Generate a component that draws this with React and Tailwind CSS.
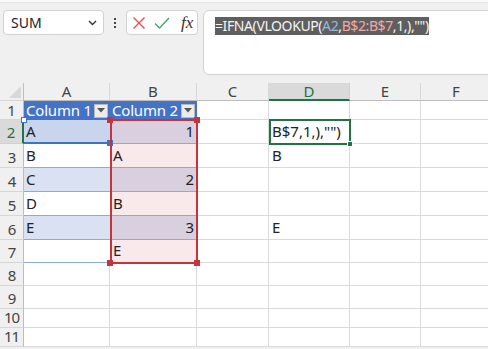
import React from 'react';

const font = { fontFamily: '"Noto Sans", "Noto Sans CJK SC", sans-serif' };

const COLS = [
  { key: 'A', w: 'w-[86px]' },
  { key: 'B', w: 'w-[87px]' },
  { key: 'C', w: 'w-[72px]' },
  { key: 'D', w: 'w-[81px]' },
  { key: 'E', w: 'w-[71px]' },
  { key: 'F', w: 'w-[71px]' },
];

// row height, cell values
const ROWS = [
  { n: 2, h: 'h-[24px]', cells: { A: 'A', B: '1', D: 'B$7,1,),"")' } },
  { n: 3, h: 'h-[24px]', cells: { A: 'B', B: 'A', D: 'B' } },
  { n: 4, h: 'h-[24px]', cells: { A: 'C', B: '2' } },
  { n: 5, h: 'h-[24px]', cells: { A: 'D', B: 'B' } },
  { n: 6, h: 'h-[24px]', cells: { A: 'E', B: '3', D: 'E' } },
  { n: 7, h: 'h-[23px]', cells: { B: 'E' } },
  { n: 8, h: 'h-[23px]', cells: {} },
  { n: 9, h: 'h-[23px]', cells: {} },
  { n: 10, h: 'h-[19px]', cells: {} },
  { n: 11, h: 'h-[19px]', cells: {} },
];

const bandA = { 2: 'bg-[#c9d5ec]', 3: 'bg-white', 4: 'bg-[#d9e1f2]', 5: 'bg-white', 6: 'bg-[#d9e1f2]', 7: 'bg-white' };
const bandB = { 2: 'bg-[#d8d0df]', 3: 'bg-[#f9e9ea]', 4: 'bg-[#d8d0df]', 5: 'bg-[#f9e9ea]', 6: 'bg-[#d8d0df]', 7: 'bg-[#f9e9ea]' };

function FilterButton() {
  return (
    <div className="w-[14px] h-[14px] shrink-0 bg-[#ececec] border border-[#b8b8b8] flex items-center justify-center">
      <svg width="8" height="5" viewBox="0 0 8 5">
        <path d="M0 0 L8 0 L4 4.5 Z" fill="#555" />
      </svg>
    </div>
  );
}

function Toolbar() {
  return (
    <div className="h-[83px] bg-[#f0f0f0]">
      <div className="h-[3px] bg-[#fafafa] border-b border-[#e3e3e3]" />
      <div className="flex items-start pt-[7px] pl-[3px]">
        <div className="w-[101px] h-[25px] shrink-0 rounded-[4px] border border-[#d2d2d2] bg-white flex items-center justify-between pl-[7px] pr-[6px]">
          <span className="text-[14px] text-[#222]">SUM</span>
          <svg width="9" height="6" viewBox="0 0 9 6">
            <path d="M1 1 L4.5 4.5 L8 1" fill="none" stroke="#333" strokeWidth="1.4" />
          </svg>
        </div>
        <div className="w-[22px] h-[25px] shrink-0 flex flex-col items-center justify-center gap-[2px]">
          <span className="w-[2px] h-[2px] bg-[#444]" />
          <span className="w-[2px] h-[2px] bg-[#444]" />
          <span className="w-[2px] h-[2px] bg-[#444]" />
        </div>
        <div className="w-[72px] h-[25px] shrink-0 rounded-[4px] border border-[#d2d2d2] bg-white flex items-center pl-[5px] gap-[8px]">
          <svg width="14" height="14" viewBox="0 0 14 14">
            <path d="M1.5 1.5 L12.5 12.5 M12.5 1.5 L1.5 12.5" stroke="#e5484d" strokeWidth="1.3" />
          </svg>
          <svg width="16" height="14" viewBox="0 0 16 14">
            <path d="M1 7.5 L5.5 12 L15 2" fill="none" stroke="#3fa65f" strokeWidth="1.3" />
          </svg>
          <span className="ml-[3px] text-[17px] italic text-[#333] leading-none" style={{ fontFamily: '"Liberation Serif", serif' }}>fx</span>
        </div>
        <div className="ml-[5px] w-[300px] h-[65px] shrink-0 rounded-[6px] border border-[#d2d2d2] bg-white pl-[11px] pt-[2px]">
          <span className="inline-block bg-[#5f5f5f] text-[14px] leading-[18px] text-[#f5f5f5] tracking-[-0.4px]">
            =IFNA(VLOOKUP(<span className="text-[#93b9e6]">A2</span>,<span className="text-[#f2a9a6]">B$2:B$7</span>,1,),"")
          </span>
        </div>
      </div>
    </div>
  );
}

function ColumnHeader() {
  return (
    <div className="flex h-[18px] bg-[#f0f0f0]">
      <div className="w-[24px] shrink-0 border-r border-[#bdbdbd] border-b border-b-[#d6d6d6] relative">
        <svg className="absolute right-[2px] bottom-[2px]" width="12" height="12" viewBox="0 0 12 12">
          <path d="M12 0 L12 12 L0 12 Z" fill="#d8d8d8" />
        </svg>
      </div>
      {COLS.map((c) =>
        c.key === 'D' ? (
          <div key={c.key} className={`${c.w} shrink-0 bg-[#dadada] border-r border-[#d0d0d0] border-b-2 border-b-[#217346] flex items-center justify-center text-[15px] text-[#217346]`}>
            {c.key}
          </div>
        ) : (
          <div key={c.key} className={`${c.w} shrink-0 border-r border-[#d8d8d8] border-b border-b-[#bdbdbd] flex items-center justify-center text-[15px] text-[#444]`}>
            {c.key}
          </div>
        )
      )}
    </div>
  );
}

function TableHeaderRow() {
  return (
    <div className="flex h-[19px]">
      <div className="w-[24px] shrink-0 bg-[#f0f0f0] border-r border-[#bdbdbd] border-b border-b-[#d6d6d6] flex items-center justify-center text-[15px] text-[#444]">1</div>
      <div className="w-[86px] shrink-0 bg-[#4472c4] flex items-center justify-between pl-[2px] pr-[2px] text-[15px] text-white tracking-[-0.2px]">
        <span>Column 1</span>
        <FilterButton />
      </div>
      <div className="w-[87px] shrink-0 bg-[#4472c4] flex items-center justify-between pl-[2px] pr-[2px] text-[15px] text-white tracking-[-0.2px]">
        <span>Column 2</span>
        <FilterButton />
      </div>
      {COLS.slice(2).map((c) => (
        <div key={c.key} className={`${c.w} shrink-0 bg-white border-r border-b border-[#dadada]`} />
      ))}
    </div>
  );
}

function DataRow({ row }) {
  const inTable = row.n <= 7;
  const active = row.n === 2;
  return (
    <div className={`flex ${row.h}`}>
      {active ? (
        <div className="w-[24px] shrink-0 bg-[#dadada] border-r-2 border-[#217346] border-b border-b-[#d0d0d0] flex items-end justify-center text-[15px] text-[#217346]">{row.n}</div>
      ) : (
        <div className="w-[24px] shrink-0 bg-[#f0f0f0] border-r border-[#bdbdbd] border-b border-b-[#d6d6d6] flex items-end justify-center text-[15px] leading-[20px] text-[#444] tracking-[-1px]">{row.n}</div>
      )}
      {COLS.map((c) => {
        const v = row.cells[c.key];
        if (inTable && c.key === 'A') {
          return (
            <div key={c.key} className={`${c.w} shrink-0 ${bandA[row.n]} border-b border-[#8ea9db] flex items-end pb-[1px] pl-[2px] text-[15px] text-[#222]`}>
              {v}
            </div>
          );
        }
        if (inTable && c.key === 'B') {
          const num = /^\d+$/.test(v || '');
          return (
            <div key={c.key} className={`${c.w} shrink-0 ${bandB[row.n]} border-b border-[#8ea9db] flex items-end pb-[1px] px-[3px] text-[15px] text-[#222] ${num ? 'justify-end' : 'justify-start'}`}>
              {v}
            </div>
          );
        }
        return (
          <div key={c.key} className={`${c.w} shrink-0 bg-white border-r border-b border-[#dadada] flex items-end pb-[1px] pl-[3px] text-[15px] text-[#222] whitespace-nowrap overflow-visible`}>
            {v}
          </div>
        );
      })}
    </div>
  );
}

function Handle({ className }) {
  return <div className={`absolute w-[6px] h-[6px] ${className}`} />;
}

export default function App() {
  return (
    <div className="w-[488px] h-[349px] overflow-hidden bg-[#f0f0f0]" style={font}>
      <Toolbar />
      <div className="relative">
        <ColumnHeader />
        <TableHeaderRow />
        {ROWS.map((r) => (
          <DataRow key={r.n} row={r} />
        ))}

        {/* A2 reference highlight */}
        <div className="absolute left-[24px] top-[59px] w-[86px] h-[2px] bg-[#3a75c4]" />
        <Handle className="left-[21px] top-[34px] w-[5px] h-[5px] bg-white border border-[#3a75c4]" />
        <Handle className="left-[107px] top-[57px] bg-[#3a75c4]" />

        {/* B2:B7 reference highlight */}
        <div className="absolute left-[110px] top-[36px] w-[88px] h-[145px] border-2 border-[#c4343c]" />
        <Handle className="left-[107px] top-[34px] bg-[#c4343c]" />
        <Handle className="left-[194px] top-[34px] bg-[#c4343c]" />
        <Handle className="left-[107px] top-[177px] bg-[#c4343c]" />
        <Handle className="left-[194px] top-[177px] bg-[#c4343c]" />

        {/* active cell D2 */}
        <div className="absolute left-[269px] top-[36px] w-[82px] h-[26px] border-2 border-[#217346]" />
        <Handle className="left-[347px] top-[58px] w-[5px] h-[5px] bg-[#217346] border border-white" />
      </div>
    </div>
  );
}
